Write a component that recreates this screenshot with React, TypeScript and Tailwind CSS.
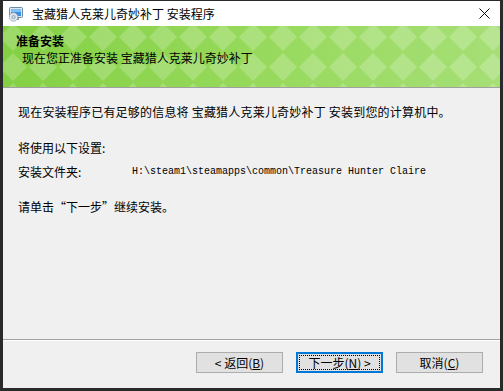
import React from 'react';

const cjk = "font-['Noto_Sans_CJK_SC','Microsoft_YaHei',sans-serif]";

function SetupIcon() {
  return (
    <svg width="16" height="16" viewBox="0 0 16 16">
      <rect x="1.5" y="1.5" width="13" height="10" rx="1" fill="#dbe6f1" stroke="#6d8aa8" />
      <rect x="3" y="3" width="10" height="7" fill="#3d8fe0" />
      <rect x="3" y="3" width="10" height="3" fill="#7cc0f5" />
      <rect x="5" y="12" width="6" height="2" fill="#8a9bb0" />
      <circle cx="5.5" cy="11" r="4.2" fill="#e8eef5" stroke="#9aa7b8" strokeWidth="0.8" />
      <circle cx="5.5" cy="11" r="2.5" fill="#b7c6d8" />
      <circle cx="5.5" cy="11" r="1" fill="#ffffff" stroke="#7f8fa3" strokeWidth="0.5" />
    </svg>
  );
}

function Banner() {
  return (
    <div className="relative h-[61px] bg-gradient-to-r from-[#84d043] via-[#96d95b] to-[#a6df76] overflow-hidden">
      <svg className="absolute inset-0" width="100%" height="100%">
        <defs>
          <pattern id="dia" x="-5" y="-4" width="30" height="30" patternUnits="userSpaceOnUse">
            <polygon points="15,1 29,15 15,29 1,15" fill="#ffffff" fillOpacity="0.2" />
          </pattern>
        </defs>
        <rect width="100%" height="100%" fill="url(#dia)" />
      </svg>
      <div className="relative pt-[7px] pl-[13px] text-black">
        <div className="text-[12px] leading-[16px] font-bold">准备安装</div>
        <div className="mt-px pl-[6px] text-[12px] leading-[16px]">现在您正准备安装 宝藏猎人克莱儿奇妙补丁</div>
      </div>
    </div>
  );
}

function Btn({ children, focused }: { children: React.ReactNode; focused?: boolean }) {
  return (
    <div
      className={
        'w-[87px] h-[21px] flex items-center justify-center text-[12px] leading-none bg-[#e1e1e1] ' +
        (focused ? 'border-2 border-[#0078d7] p-px' : 'border border-[#adadad]')
      }
    >
      {focused ? (
        <div className="w-full h-full flex items-center justify-center border border-dotted border-black">{children}</div>
      ) : (
        children
      )}
    </div>
  );
}

export default function App() {
  return (
    <div className={`w-[503px] h-[391px] bg-[#2a2a2a] pt-px pl-[3px] pr-[3px] ${cjk}`}>
      <div className="w-[497px] h-[387px] flex flex-col bg-[#f0f0f0]">
        <div className="h-[25px] bg-white flex items-center pl-[5px] pr-[10px]">
          <SetupIcon />
          <span className="ml-[8px] text-[12px] text-black">宝藏猎人克莱儿奇妙补丁 安装程序</span>
          <svg className="ml-auto" width="11" height="11" viewBox="0 0 11 11">
            <path d="M0.5 0.5 L10.5 10.5 M10.5 0.5 L0.5 10.5" stroke="#111" strokeWidth="1" />
          </svg>
        </div>
        <Banner />
        <div className="h-px bg-[#a0a0a0]" />
        <div className="flex-1 pl-[15px] pt-[16px] text-[12px] leading-[16px] text-black">
          <div className="tracking-[0.2px]">现在安装程序已有足够的信息将 宝藏猎人克莱儿奇妙补丁 安装到您的计算机中。</div>
          <div className="mt-[20px]">将使用以下设置:</div>
          <div className="mt-[8px] flex">
            <span className="w-[114px]">安装文件夹:</span>
            <span className="font-['Liberation_Mono',monospace] text-[10px]">H:\steam1\steamapps\common\Treasure Hunter Claire</span>
          </div>
          <div className="mt-[19px]">请单击“下一步”继续安装。</div>
        </div>
        <div className="h-px bg-[#a0a0a0]" />
        <div className="h-px bg-white" />
        <div className="h-[47px] flex justify-end gap-[13px] pt-[11px] pr-[17px] text-black">
          <Btn>
            <span>&lt; 返回(<span className="underline">B</span>)</span>
          </Btn>
          <Btn focused>
            <span>下一步(<span className="underline">N</span>) &gt;</span>
          </Btn>
          <Btn>
            <span>取消(<span className="underline">C</span>)</span>
          </Btn>
        </div>
      </div>
    </div>
  );
}
